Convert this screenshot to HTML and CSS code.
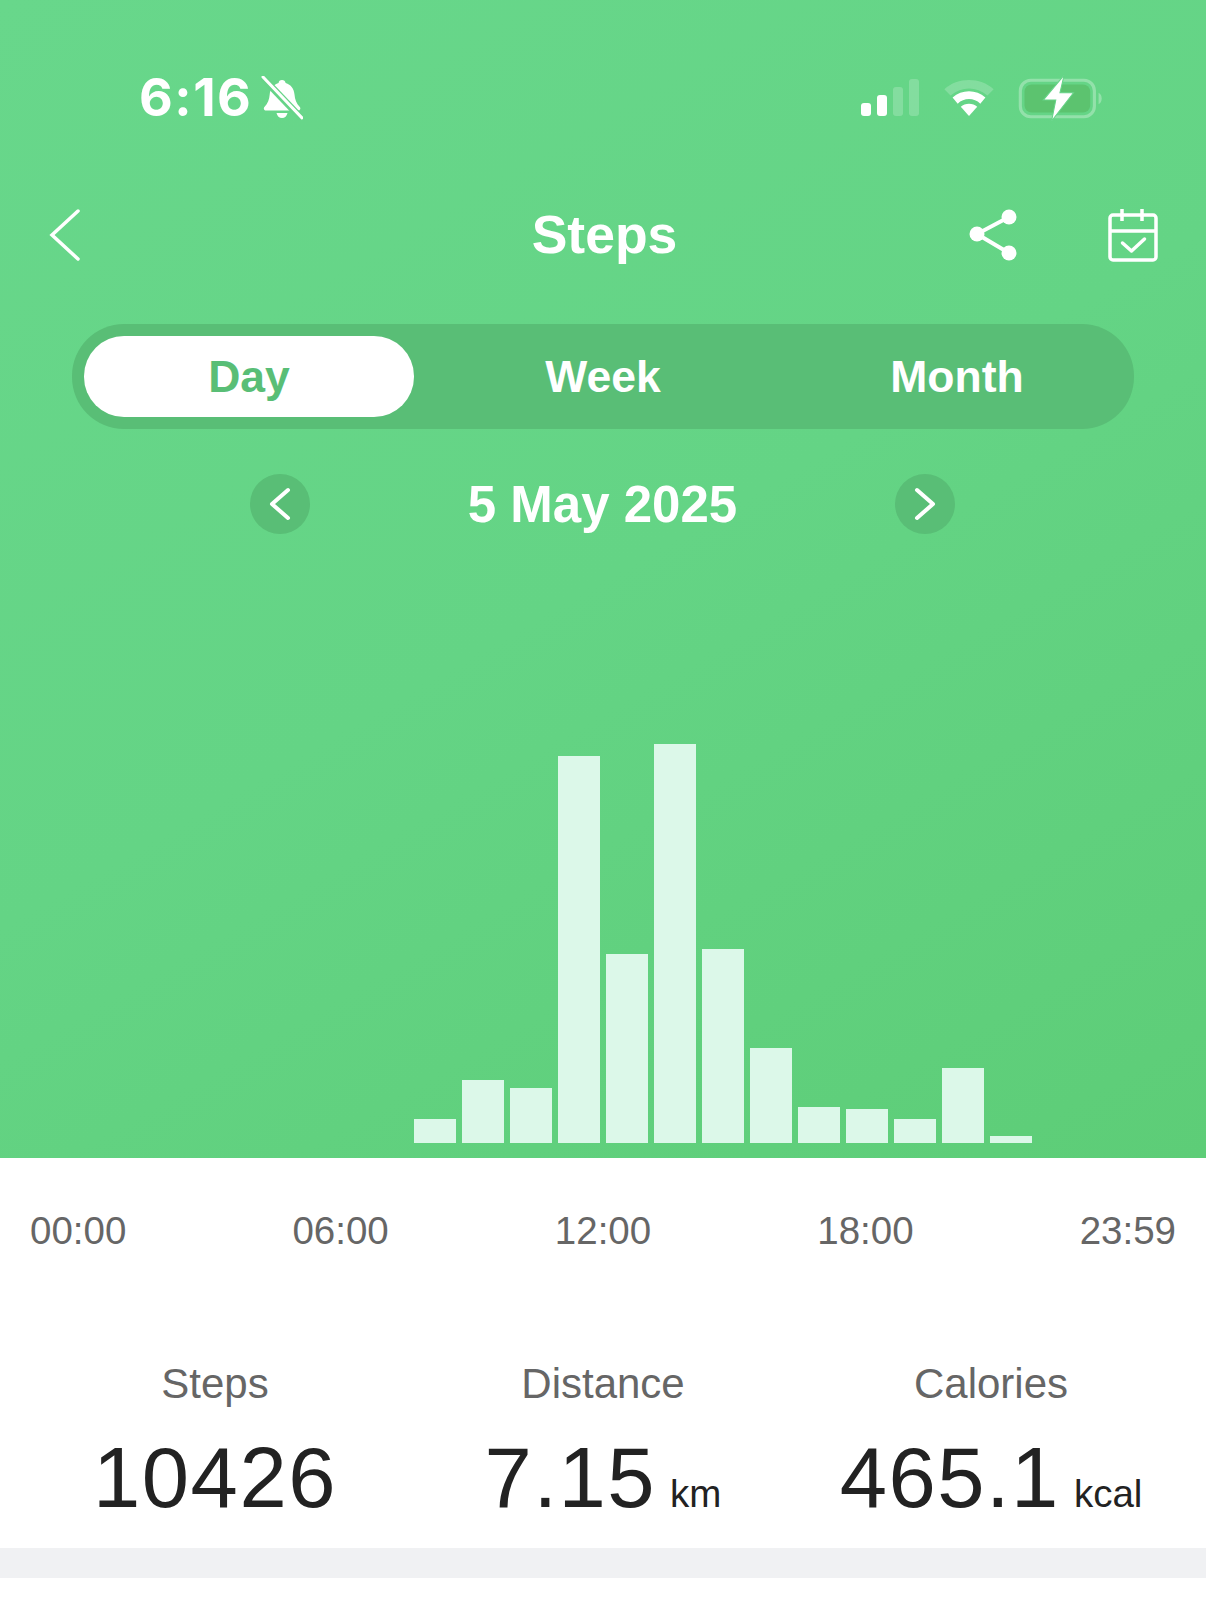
FILE: index.html
```html
<!DOCTYPE html>
<html lang="en">
<head>
  <meta charset="UTF-8">
  <title>Steps</title>
  <link rel="stylesheet" href="styles.css">
</head>
<body>
  <!-- green header -->
  <div class="hero">
    <div class="status-bar">
      <div class="status-left">
        <span class="clock">6:16</span>
        <svg class="bell" width="42" height="44" viewBox="0 0 42 44">
          <path d="M21 4c2 0 3.300 1.300 3.600 3 5.400 1.500 8.400 6 8.900 11.500.4 5 1.800 9 5.300 12.500 1.200 1.400.4 3.500-1.600 3.500H5c-2 0-2.800-2.100-1.600-3.500 3.500-3.500 4.900-7.500 5.300-12.500.5-5.500 3.500-10 8.900-11.500C17.700 5.300 19 4 21 4z" fill="#fff"/>
          <path d="M15.500 37h11c-.6 3-2.800 5-5.500 5s-4.900-2-5.500-5z" fill="#fff"/>
          <path d="M1 1l41 43" stroke="#66d488" stroke-width="7"/>
          <path d="M2 1l39 41" stroke="#fff" stroke-width="3" stroke-linecap="round"/>
        </svg>
      </div>
      <div class="status-right">
        <svg width="60" height="38" viewBox="0 0 60 38">
          <rect x="1" y="24" width="10" height="13" rx="3" fill="#fff"/>
          <rect x="17" y="16" width="10" height="21" rx="3" fill="#fff"/>
          <rect x="33" y="8" width="10" height="29" rx="3" fill="#fff" opacity="0.2"/>
          <rect x="49" y="0" width="10" height="37" rx="3" fill="#fff" opacity="0.2"/>
        </svg>
        <svg width="54" height="39" viewBox="0 0 52 38">
          <path d="M2 10c13-12 35-12 48 0l-6 6C33 7 19 7 8 16z" fill="#fff" opacity="0.2"/>
          <path d="M10 18c9-8 23-8 32 0l-5 6c-6-6-16-6-22 0z" fill="#fff"/>
          <path d="M18 27c4-4 12-4 16 0l-8 9z" fill="#fff"/>
        </svg>
        <svg width="86" height="48" viewBox="0 0 82 46">
          <rect x="2" y="6" width="71" height="35" rx="10" fill="none" stroke="#fff" stroke-opacity="0.3" stroke-width="3"/>
          <rect x="6" y="10" width="63" height="27" rx="7" fill="#5cc36f"/>
          <path d="M77 18c2 1 3 3 3 5.500s-1 4.500-3 5.500z" fill="#fff" opacity="0.3"/>
          <path d="M44 1L24 25h12l-4 20 21-27H40z" fill="#fff" stroke="#66d488" stroke-width="1"/>
        </svg>
      </div>
    </div>

    <div class="nav-bar">
      <svg class="back-icon" width="34" height="54" viewBox="0 0 34 54">
        <path d="M30 3L4 27l26 24" fill="none" stroke="#fff" stroke-width="3.500" stroke-linecap="round"/>
      </svg>
      <div class="nav-title">Steps</div>
      <div class="nav-actions">
        <svg width="50" height="54" viewBox="0 0 50 54">
          <path d="M41 9L9 26l32 19" fill="none" stroke="#fff" stroke-width="4"/>
          <circle cx="41" cy="9" r="7.500" fill="#fff"/>
          <circle cx="9" cy="26" r="7.500" fill="#fff"/>
          <circle cx="41" cy="45" r="7.500" fill="#fff"/>
        </svg>
        <svg width="50" height="54" viewBox="0 0 50 54">
          <rect x="2" y="7" width="46" height="45" rx="3" fill="none" stroke="#fff" stroke-width="3.500"/>
          <path d="M2 23h46M14 1v12M34 1v12" fill="none" stroke="#fff" stroke-width="3.500"/>
          <path d="M14.500 35l9 8 13-12" fill="none" stroke="#fff" stroke-width="3.500" stroke-linecap="round" stroke-linejoin="round"/>
        </svg>
      </div>
    </div>

    <div class="tabs">
      <div class="tab active">Day</div>
      <div class="tab">Week</div>
      <div class="tab">Month</div>
    </div>

    <div class="date-row">
      <div class="date-arrow">
        <svg width="24" height="34" viewBox="0 0 24 34"><path d="M20 3L4 17l16 14" fill="none" stroke="#fff" stroke-width="4" stroke-linecap="round" stroke-linejoin="round"/></svg>
      </div>
      <div class="date-label">5 May 2025</div>
      <div class="date-arrow">
        <svg width="24" height="34" viewBox="0 0 24 34"><path d="M4 3l16 14L4 31" fill="none" stroke="#fff" stroke-width="4" stroke-linecap="round" stroke-linejoin="round"/></svg>
      </div>
    </div>

    <!-- one bar per hour -->
    <div class="chart">
      <div class="bar"></div><div class="bar"></div><div class="bar"></div><div class="bar"></div>
      <div class="bar"></div><div class="bar"></div><div class="bar"></div><div class="bar"></div>
      <div class="bar" style="height: 24px"></div>
      <div class="bar" style="height: 63px"></div>
      <div class="bar" style="height: 55px"></div>
      <div class="bar" style="height: 387px"></div>
      <div class="bar" style="height: 189px"></div>
      <div class="bar" style="height: 399px"></div>
      <div class="bar" style="height: 194px"></div>
      <div class="bar" style="height: 95px"></div>
      <div class="bar" style="height: 36px"></div>
      <div class="bar" style="height: 34px"></div>
      <div class="bar" style="height: 24px"></div>
      <div class="bar" style="height: 75px"></div>
      <div class="bar" style="height: 7px"></div>
      <div class="bar"></div><div class="bar"></div><div class="bar"></div>
    </div>
  </div>

  <div class="time-axis">
    <span>00:00</span>
    <span>06:00</span>
    <span>12:00</span>
    <span>18:00</span>
    <span>23:59</span>
  </div>

  <div class="stats">
    <div class="stat">
      <div class="stat-label">Steps</div>
      <div class="stat-value">10426</div>
    </div>
    <div class="stat">
      <div class="stat-label">Distance</div>
      <div class="stat-value">7.15<span class="stat-unit">km</span></div>
    </div>
    <div class="stat">
      <div class="stat-label">Calories</div>
      <div class="stat-value">465.1<span class="stat-unit">kcal</span></div>
    </div>
  </div>

  <div class="divider"></div>
</body>
</html>
```

FILE: styles.css
```css
* {
  box-sizing: border-box;
  margin: 0;
  padding: 0;
}

body {
  background: #fff;
  font-family: "Liberation Sans", Arial, sans-serif;
  overflow: hidden;
}

/* green header */
.hero {
  height: 1158px;
  display: flex;
  flex-direction: column;
  background: linear-gradient(150deg, #68d78b 0%, #64d485 50%, #5dcd77 100%);
  color: #fff;
}

.status-bar {
  height: 185px;
  padding: 11px 102px 0 139px;
  display: flex;
  justify-content: space-between;
  align-items: center;
}

.status-left {
  display: flex;
  align-items: center;
  gap: 9px;
}

.clock {
  font-family: Inter, sans-serif;
  font-size: 52px;
  font-weight: 700;
  letter-spacing: 1.500px;
  line-height: 1;
}

.status-right {
  display: flex;
  align-items: center;
  gap: 22px;
}

.nav-bar {
  height: 100px;
  padding: 0 48px;
  display: grid;
  grid-template-columns: 1fr auto 1fr;
  align-items: center;
}

.nav-title {
  margin: -2px 0 0 3px;
  font-size: 53.500px;
  font-weight: 700;
  text-align: center;
}

.nav-actions {
  display: flex;
  justify-content: flex-end;
  gap: 90px;
}

.tabs {
  width: 1062px;
  height: 105px;
  margin: 39px 0 0 72px;
  padding: 12px;
  display: flex;
  gap: 24px;
  background: #59be76;
  border-radius: 52px;
}

.tab {
  flex: 1;
  display: flex;
  align-items: center;
  justify-content: center;
  font-size: 44.500px;
  font-weight: 700;
  border-radius: 40px;
}

.tab.active {
  background: #fff;
  color: #59be76;
}

.date-row {
  height: 60px;
  margin: 45px 0 0 250px;
  width: 705px;
  display: flex;
  justify-content: space-between;
  align-items: center;
}

.date-arrow {
  width: 60px;
  height: 60px;
  border-radius: 50%;
  background: #59be76;
  display: flex;
  align-items: center;
  justify-content: center;
}

.date-label {
  font-size: 51px;
  font-weight: 700;
}

.chart {
  flex: 1;
  padding: 0 30px 15px;
  display: flex;
  align-items: flex-end;
  gap: 6px;
}

.bar {
  flex: 1;
  background: #dcf8e9;
}

/* white part */
.time-axis {
  padding: 51px 30px 0;
  display: flex;
  justify-content: space-between;
  font-size: 38.500px;
  line-height: 44px;
  color: #666;
}

.stats {
  margin-top: 107px;
  padding: 0 21px;
  display: grid;
  grid-template-columns: repeat(3, 1fr);
  text-align: center;
}

.stat-label {
  font-size: 42px;
  line-height: 48px;
  color: #666;
}

.stat-value {
  margin-top: 22px;
  font-size: 85px;
  line-height: 96px;
  letter-spacing: 1.500px;
  color: #222;
}

.stat-unit {
  margin-left: 14px;
  font-size: 38.500px;
  letter-spacing: 0;
}

.divider {
  height: 30px;
  margin-top: 6px;
  background: #f0f1f3;
}
```
